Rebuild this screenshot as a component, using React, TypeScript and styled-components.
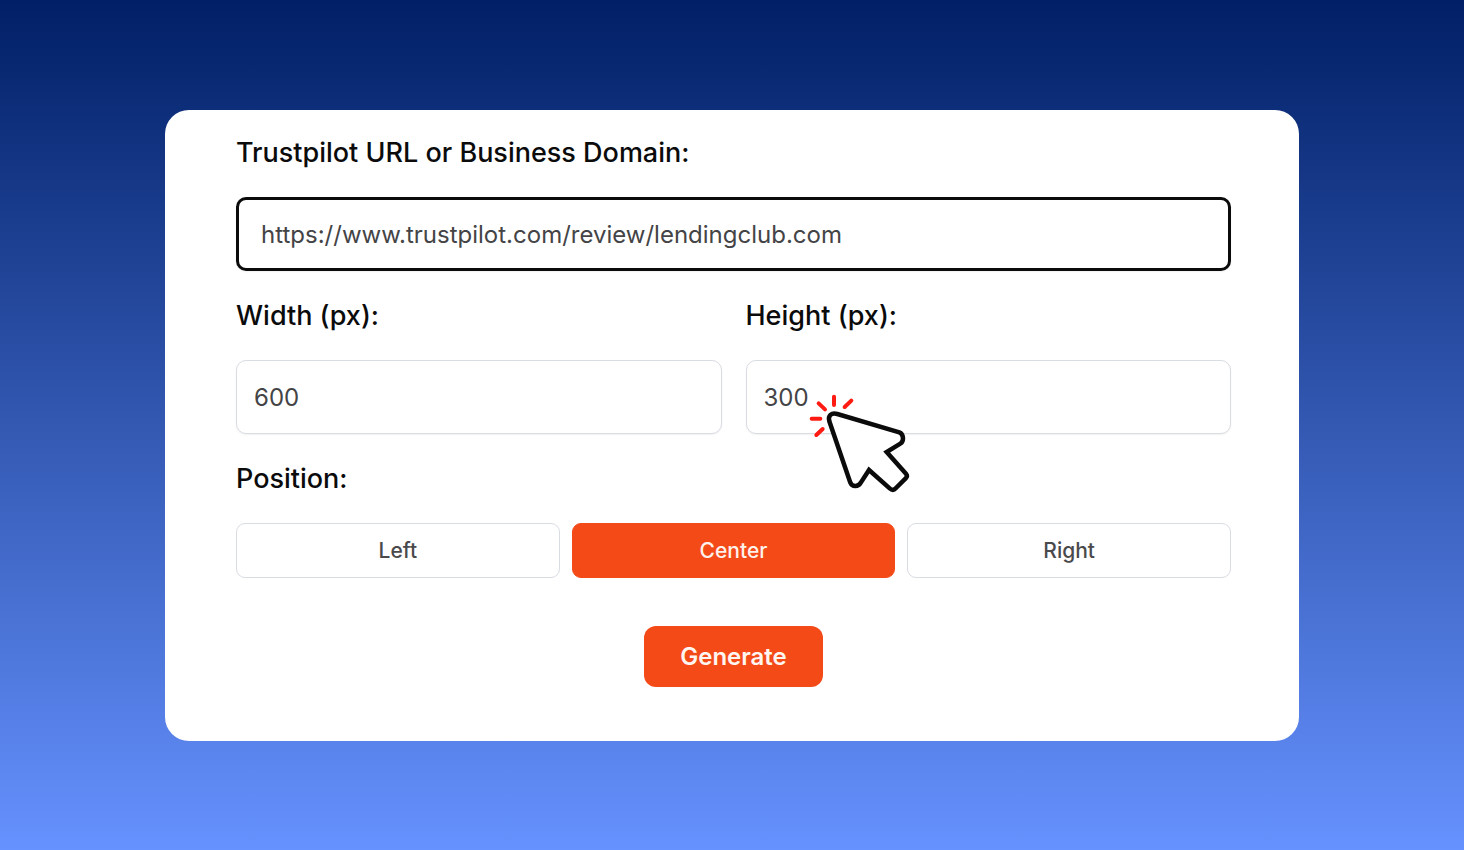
import React, { useState } from "react";
import styled, { createGlobalStyle } from "styled-components";

const GlobalStyle = createGlobalStyle`
  * { box-sizing: border-box; }
  body { margin: 0; }
  body, input, button { font-family: Inter, "Liberation Sans", sans-serif; }
`;

const Page = styled.main`
  display: flex;
  justify-content: center;
  align-items: flex-start;
  min-height: 100vh;
  padding: 110px 24px;
  background: linear-gradient(180deg, #001f66 0%, #6692ff 100%);
`;

const Card = styled.form`
  display: flex;
  flex-direction: column;
  gap: 28px;
  width: 100%;
  max-width: 1134px;
  padding: 26px 68px 54px 71px;
  border-radius: 24px;
  background: #ffffff;
`;

const Row = styled.div`
  display: grid;
  grid-template-columns: 1fr 1fr;
  gap: 24px;
`;

const Field = styled.div`
  display: flex;
  flex-direction: column;
  gap: 28px;
  min-width: 0;
`;

const Label = styled.label`
  font-size: 27px;
  font-weight: 500;
  line-height: 33px;
  color: #0b0b0c;
`;

const InputWrap = styled.div`
  position: relative;
  display: flex;
`;

const TextInput = styled.input<{ $active?: boolean }>`
  width: 100%;
  min-width: 0;
  height: 74px;
  padding: 0 ${(p) => (p.$active ? 22 : 17)}px;
  border: ${(p) => (p.$active ? "3px solid #0b0b0c" : "1px solid #d9dce3")};
  border-radius: 10px;
  outline: none;
  background: #ffffff;
  box-shadow: 0 1px 2px rgba(0, 0, 0, 0.06);
  font-size: 24px;
  color: #444446;
`;

const Options = styled.div`
  display: grid;
  grid-template-columns: repeat(3, 1fr);
  gap: 12px;
`;

const Option = styled.button<{ $selected: boolean }>`
  height: 55px;
  padding: 0;
  border: 1px solid ${(p) => (p.$selected ? "#f34a17" : "#d9dce3")};
  border-radius: 9px;
  background: ${(p) => (p.$selected ? "#f34a17" : "#ffffff")};
  color: ${(p) => (p.$selected ? "#fff1ec" : "#4a4a4c")};
  font-size: 21px;
  font-weight: 500;
  cursor: pointer;
`;

const Submit = styled.button`
  align-self: center;
  height: 61px;
  margin-top: 20px;
  padding: 0 36px;
  border: 0;
  border-radius: 12px;
  background: #f34a17;
  color: #fff5f1;
  font-size: 24px;
  font-weight: 600;
  cursor: pointer;
`;

const Pointer = styled.svg`
  position: absolute;
  left: 44px;
  top: 20px;
  width: 140px;
  height: 130px;
  pointer-events: none;
`;

const ClickPointer = () => (
  <Pointer viewBox="0 0 420 390" fill="none" aria-hidden="true">
    <g stroke="#ff1a12" strokeWidth="12" strokeLinecap="round">
      <path d="M132 50V75M184 62L164 81M86 70L105 88M65 116.500H91M98 147L79 165" />
    </g>
    <path
      d="M118 124C113 107 124 97 142 102L328 157C341 162 343 184 331 191L290 216L348 281Q354 288 347 295L318 324Q309 334 299 325L237 270L213 307C205 321 187 322 181 308Z"
      fill="#ffffff"
      stroke="#0b0b0c"
      strokeWidth="13.500"
    />
  </Pointer>
);

const positions = ["Left", "Center", "Right"];

export default function App() {
  const [position, setPosition] = useState("Center");
  return (
    <>
      <GlobalStyle />
      <Page>
        <Card onSubmit={(e) => e.preventDefault()}>
          <Field>
            <Label htmlFor="url">Trustpilot URL or Business Domain:</Label>
            <TextInput
              id="url"
              type="text"
              $active
              defaultValue="https://www.trustpilot.com/review/lendingclub.com"
            />
          </Field>
          <Row>
            <Field>
              <Label htmlFor="width">Width (px):</Label>
              <TextInput id="width" type="text" inputMode="numeric" defaultValue="600" />
            </Field>
            <Field>
              <Label htmlFor="height">Height (px):</Label>
              <InputWrap>
                <TextInput id="height" type="text" inputMode="numeric" defaultValue="300" />
                <ClickPointer />
              </InputWrap>
            </Field>
          </Row>
          <Field>
            <Label as="span" id="position">
              Position:
            </Label>
            <Options role="group" aria-labelledby="position">
              {positions.map((name) => (
                <Option
                  key={name}
                  type="button"
                  $selected={name === position}
                  aria-pressed={name === position}
                  onClick={() => setPosition(name)}
                >
                  {name}
                </Option>
              ))}
            </Options>
          </Field>
          <Submit type="submit">Generate</Submit>
        </Card>
      </Page>
    </>
  );
}
